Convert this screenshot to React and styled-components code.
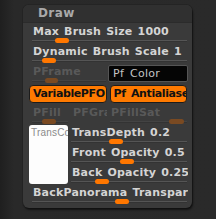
import React from "react";
import styled, { createGlobalStyle } from "styled-components";

const Global = createGlobalStyle`
  html, body {
    margin: 0;
    background: #292929;
  }
  body {
    font-family: "DejaVu Sans", "Liberation Sans", sans-serif;
  }
`;

const Page = styled.div`
  width: 216px;
  height: 219px;
  padding: 5px 0 0 23px;
  box-sizing: border-box;
  background: linear-gradient(90deg, #1f1f1f 0px, #292929 14px, #2a2a2a 100%);
`;

const Panel = styled.div`
  width: 169px;
  border-radius: 6px;
  background: #3a3a3a;
  box-shadow: 1px 2px 2px rgba(0, 0, 0, 0.55), 0 0 0 1px #242424;
  overflow: hidden;
`;

const Header = styled.div`
  height: 17px;
  line-height: 17px;
  padding-left: 15px;
  background: #303030;
  border-bottom: 1px solid #2b2b2b;
  color: #a9a9a9;
  font-size: 12px;
  font-weight: bold;
  letter-spacing: 0.4px;
`;

const Body = styled.div`
  display: flex;
  flex-direction: column;
  padding: 0 4px 4px 6px;
`;

const Row = styled.div`
  display: flex;
  gap: ${(p) => p.$gap || 0}px;
`;

const Column = styled.div`
  display: flex;
  flex-direction: column;
  flex: 1;
  min-width: 0;
`;

const SliderBox = styled.div`
  position: relative;
  flex: none;
  height: 20px;
  width: ${(p) => (p.$w ? `${p.$w}px` : "auto")};
  min-width: 0;
`;

const Label = styled.div`
  padding: 3px 0 0 4px;
  line-height: 12px;
  font-size: 11px;
  font-weight: bold;
  letter-spacing: 0.2px;
  word-spacing: 1px;
  white-space: nowrap;
  overflow: hidden;
  color: ${(p) => (p.$off ? "#595959" : "#d4d4d4")};
`;

const Track = styled.div`
  position: absolute;
  left: 3px;
  right: 1px;
  top: 17px;
  height: 1px;
  background: ${(p) => (p.$off ? "#434343" : "#555555")};
  border-bottom: 1px solid #333;
`;

const Knob = styled.div`
  position: absolute;
  top: 15px;
  height: 5px;
  width: ${(p) => p.$len || 14}px;
  border-radius: 3px;
  background: ${(p) => (p.$off ? "#7a4a22" : "#ff7700")};
`;

const Slider = ({ label, at, len, off, w, noKnob }) => (
  <SliderBox $w={w}>
    <Label $off={off}>{label}</Label>
    {!noKnob && <Track $off={off} />}
    {!noKnob && <Knob $off={off} $len={len} style={{ left: at }} />}
  </SliderBox>
);

const ColorBox = styled.div`
  flex: none;
  width: 80px;
  height: 17px;
  margin: 2px 0 1px 1px;
  box-sizing: border-box;
  background: #050505;
  border: 1px solid #555;
  border-radius: 2px;
  padding-left: 4px;
  line-height: 15px;
  font-size: 11px;
  color: #c4c4c4;
  letter-spacing: 0.3px;
  word-spacing: 2px;
`;

const Button = styled.div`
  flex: 1;
  height: 18px;
  box-sizing: border-box;
  background: #ff7a00;
  border: 1px solid #1c1c1c;
  border-radius: 4px;
  padding-left: 3px;
  line-height: 16px;
  font-size: 11px;
  font-weight: bold;
  letter-spacing: -0.4px;
  word-spacing: 2px;
  color: #111;
  white-space: nowrap;
  overflow: hidden;
  min-width: 0;
`;

const ButtonRow = styled(Row)`
  margin: 2px 1px 1px 0;
`;

const Swatch = styled.div`
  flex: none;
  width: 39px;
  height: 59px;
  margin-top: 1px;
  box-sizing: border-box;
  background: #fdfdfd;
  border-radius: 3px;
  padding: 2px 0 0 2px;
  font-family: "Liberation Sans", sans-serif;
  font-size: 10px;
  line-height: 12px;
  color: #8a8a8a;
  white-space: nowrap;
  overflow: hidden;
  letter-spacing: 0.2px;
`;

export default function App() {
  return (
    <>
      <Global />
      <Page>
        <Panel>
          <Header>Draw</Header>
          <Body>
            <Slider label="Max Brush Size 1000" at={26} />
            <Slider label="Dynamic Brush Scale 1" at={13} />
            <Row>
              <Slider label="PFrame" at={16} len={13} w={78} off />
              <ColorBox>Pf Color</ColorBox>
            </Row>
            <ButtonRow $gap={3}>
              <Button>VariablePFO</Button>
              <Button>Pf Antialiase</Button>
            </ButtonRow>
            <Row>
              <Slider label="PFill" at={13} w={40} off />
              <Slider label="PFGradient" w={38} off noKnob />
              <Slider label="PFillSat" at={62} len={15} w={81} off />
            </Row>
            <Row>
              <Swatch>TransColor</Swatch>
              <Column>
                <Slider label="TransDepth 0.2" at={41} />
                <Slider label="Front Opacity 0.5" at={52} />
                <Slider label="Back Opacity 0.25" at={27} />
              </Column>
            </Row>
            <Slider label="BackPanorama Transparency" at={86} />
          </Body>
        </Panel>
      </Page>
    </>
  );
}
